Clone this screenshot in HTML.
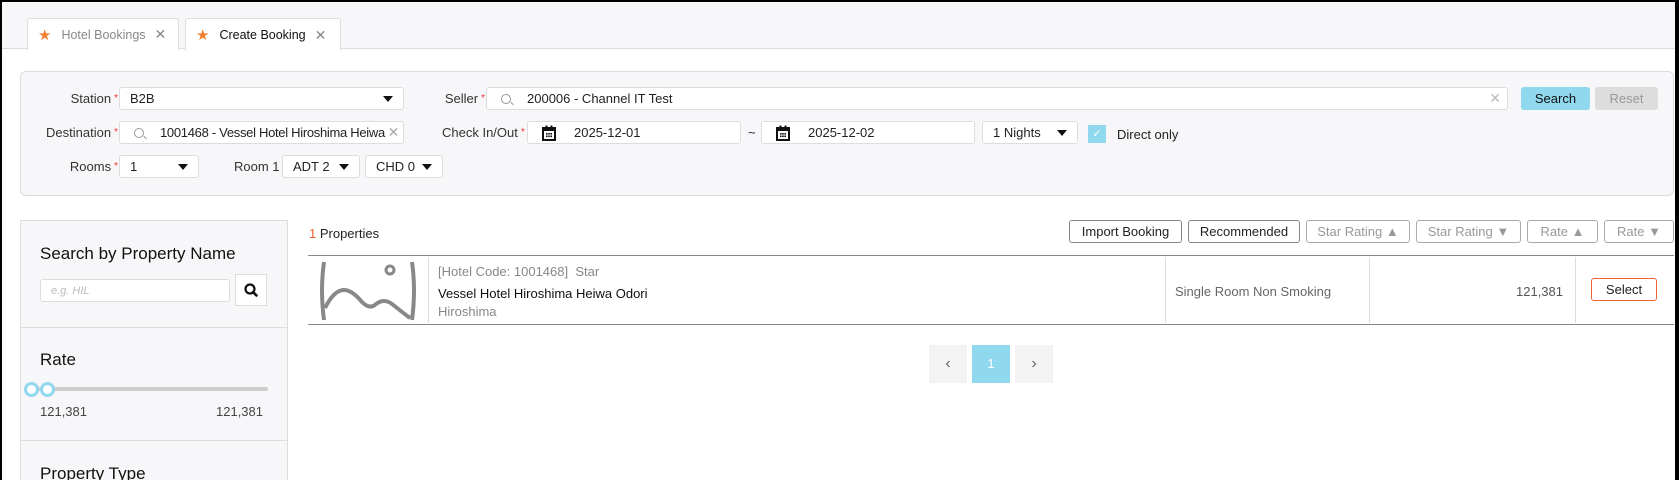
<!DOCTYPE html>
<html><head><meta charset="utf-8"><style>
*{box-sizing:border-box;margin:0;padding:0}
body{width:1679px;height:480px;overflow:hidden;background:#000;font-family:"Liberation Sans",sans-serif;font-size:13px;color:#222;position:relative}
#pg{position:absolute;left:2px;top:2px;width:1673px;height:478px;background:#fff;overflow:hidden}
.a{position:absolute;white-space:nowrap}
.top{left:0;top:0;width:1673px;height:47px;background:#f7f6f9;border-bottom:1px solid #ddd}
.tab{top:16px;height:32px;border:1px solid #ddd;border-bottom:none;background:#fff;border-radius:3px 3px 0 0;display:flex;align-items:center;padding-left:10px;font-size:12.5px}
.star{color:#f08030;font-size:15px;margin-right:10px}
.x{color:#888;font-size:14px;margin-left:9px}
.panel{left:18px;top:69px;width:1654px;height:125px;background:#f7f6f9;border:1px solid #ddd;border-radius:6px}
.lbl{text-align:right;color:#333;font-size:13px;line-height:24px}
.lbl i{color:#e33;font-style:normal;font-size:10px;margin-left:3px;vertical-align:top}
.inp{background:#fff;border:1px solid #ddd;border-radius:3px;height:23px;display:flex;align-items:center;padding-left:10px;font-size:13px;overflow:hidden;white-space:nowrap}
.tri{position:absolute;right:10px;top:8px;width:0;height:0;border-left:5px solid transparent;border-right:5px solid transparent;border-top:6px solid #111}
.mag{flex:none;width:10px;height:10px;border:1.3px solid #999;border-radius:50%;margin-right:16px;position:relative;margin-left:4px}
.mag:after{content:"";position:absolute;width:4px;height:1.3px;background:#999;right:-4px;bottom:-2px;transform:rotate(45deg)}
.btn{border:1px solid #888;border-radius:3px;background:#fff;height:23px;display:flex;align-items:center;justify-content:center;font-size:13px}
.gray{color:#999;border-color:#aaa}
.side{left:18px;top:218px;width:268px;height:270px;background:#f7f6f9;border:1px solid #ddd}
.h{font-size:17px;color:#111}
</style></head><body><div id="pg">
<div class="a top"></div>
<div class="a tab" style="left:25px;width:152px;color:#888"><span class="star">★</span>Hotel Bookings<span class="x">✕</span></div>
<div class="a tab" style="left:183px;width:156px;height:33px;color:#111"><span class="star">★</span>Create Booking<span class="x">✕</span></div>

<div class="a panel"></div>
<div class="a lbl" style="left:30px;top:85px;width:86px">Station<i>*</i></div>
<div class="a inp" style="left:117px;top:85px;width:285px">B2B<span class="tri"></span></div>
<div class="a lbl" style="left:30px;top:119px;width:86px">Destination<i>*</i></div>
<div class="a inp" style="left:117px;top:119px;width:285px;letter-spacing:-0.3px"><span class="mag"></span>1001468 - Vessel Hotel Hiroshima Heiwa<span style="color:#aaa;position:absolute;right:4px;font-size:14px;background:#fff">✕</span></div>
<div class="a lbl" style="left:30px;top:153px;width:86px">Rooms<i>*</i></div>
<div class="a inp" style="left:117px;top:153px;width:80px">1<span class="tri"></span></div>
<div class="a lbl" style="left:232px;top:153px">Room 1</div>
<div class="a inp" style="left:280px;top:153px;width:78px">ADT 2<span class="tri"></span></div>
<div class="a inp" style="left:363px;top:153px;width:78px">CHD 0<span class="tri"></span></div>

<div class="a lbl" style="left:420px;top:85px;width:63px">Seller<i>*</i></div>
<div class="a inp" style="left:484px;top:85px;width:1022px"><span class="mag"></span>200006 - Channel IT Test<span style="color:#bbb;position:absolute;right:6px;font-size:14px">✕</span></div>
<div class="a btn" style="left:1519px;top:85px;width:69px;background:#90d8ee;border-color:#90d8ee;color:#111">Search</div>
<div class="a btn" style="left:1593px;top:85px;width:63px;background:#ddd;border-color:#ddd;color:#999">Reset</div>
<div class="a lbl" style="left:440px;top:119px;width:103px;text-align:left">Check In/Out<i>*</i></div>
<div class="a inp" style="left:525px;top:119px;width:214px;padding-left:14px"><svg width="14" height="16" viewBox="0 0 14 16" style="margin-right:18px"><rect x="1" y="3" width="12" height="12" fill="none" stroke="#111" stroke-width="2"/><rect x="1" y="3" width="12" height="3" fill="#111"/><rect x="3.5" y="0.5" width="2" height="3" fill="#111"/><rect x="8.5" y="0.5" width="2" height="3" fill="#111"/><g fill="#111"><rect x="4" y="8" width="1.6" height="1.6"/><rect x="6.2" y="8" width="1.6" height="1.6"/><rect x="8.4" y="8" width="1.6" height="1.6"/><rect x="4" y="10.5" width="1.6" height="1.6"/><rect x="6.2" y="10.5" width="1.6" height="1.6"/><rect x="8.4" y="10.5" width="1.6" height="1.6"/></g></svg>2025-12-01</div>
<div class="a" style="left:746px;top:123px">~</div>
<div class="a inp" style="left:759px;top:119px;width:214px;padding-left:14px"><svg width="14" height="16" viewBox="0 0 14 16" style="margin-right:18px"><rect x="1" y="3" width="12" height="12" fill="none" stroke="#111" stroke-width="2"/><rect x="1" y="3" width="12" height="3" fill="#111"/><rect x="3.5" y="0.5" width="2" height="3" fill="#111"/><rect x="8.5" y="0.5" width="2" height="3" fill="#111"/><g fill="#111"><rect x="4" y="8" width="1.6" height="1.6"/><rect x="6.2" y="8" width="1.6" height="1.6"/><rect x="8.4" y="8" width="1.6" height="1.6"/><rect x="4" y="10.5" width="1.6" height="1.6"/><rect x="6.2" y="10.5" width="1.6" height="1.6"/><rect x="8.4" y="10.5" width="1.6" height="1.6"/></g></svg>2025-12-02</div>
<div class="a inp" style="left:980px;top:119px;width:96px">1 Nights<span class="tri"></span></div>
<div class="a" style="left:1086px;top:123px;width:18px;height:18px;background:#90d8ee;color:#fff;font-size:11px;text-align:center;line-height:18px">✓</div>
<div class="a" style="left:1115px;top:125px">Direct only</div>

<div class="a side"></div>
<div class="a h" style="left:38px;top:242px">Search by Property Name</div>
<div class="a inp" style="left:38px;top:277px;width:190px;color:#bbb;font-style:italic;font-size:11px">e.g. HIL</div>
<div class="a" style="left:233px;top:272px;width:32px;height:32px;background:#fff;border:1px solid #ddd"><svg width="30" height="30" viewBox="0 0 30 30"><circle cx="14" cy="14" r="4.5" fill="none" stroke="#111" stroke-width="2.2"/><path d="M17 17 L20.5 20.5" stroke="#111" stroke-width="2.6" stroke-linecap="round"/></svg></div>
<div class="a" style="left:18px;top:325px;width:268px;border-top:1px solid #ddd"></div>
<div class="a h" style="left:38px;top:348px">Rate</div>
<div class="a" style="left:32px;top:385px;width:234px;height:4px;background:#ccc;border-radius:2px"></div>
<div class="a" style="left:22px;top:380px;width:15px;height:15px;border:3px solid #90d8ee;border-radius:50%;background:#fff"></div>
<div class="a" style="left:38px;top:380px;width:15px;height:15px;border:3px solid #90d8ee;border-radius:50%;background:#fff"></div>
<div class="a" style="left:38px;top:402px;color:#444">121,381</div>
<div class="a" style="left:214px;top:402px;color:#444">121,381</div>
<div class="a" style="left:18px;top:438px;width:268px;border-top:1px solid #ddd"></div>
<div class="a h" style="left:38px;top:462px">Property Type</div>

<div class="a" style="left:307px;top:224px"><span style="color:#f06030">1</span> Properties</div>
<div class="a btn" style="left:1067px;top:218px;width:113px">Import Booking</div>
<div class="a btn" style="left:1186px;top:218px;width:112px">Recommended</div>
<div class="a btn gray" style="left:1304px;top:218px;width:104px">Star Rating ▲</div>
<div class="a btn gray" style="left:1414px;top:218px;width:105px">Star Rating ▼</div>
<div class="a btn gray" style="left:1525px;top:218px;width:71px">Rate ▲</div>
<div class="a btn gray" style="left:1602px;top:218px;width:70px">Rate ▼</div>
<div class="a" style="left:306px;top:253px;width:1366px;border-top:1.5px solid #888"></div>
<div class="a" style="left:306px;top:322px;width:1366px;border-top:1.5px solid #888"></div>
<svg class="a" style="left:316px;top:258px" width="100" height="62" viewBox="0 0 100 62"><path d="M6 2 Q2 30 6 60 M94 2 Q98 30 94 60" stroke="#888" stroke-width="4" fill="none"/><circle cx="72" cy="10" r="4" stroke="#888" stroke-width="3" fill="none"/><path d="M7 48 Q16 30 26 30 Q34 30 44 42 Q52 50 58 44 Q66 38 74 44 Q84 52 92 58" stroke="#888" stroke-width="4" fill="none"/></svg>
<div class="a" style="left:426px;top:255px;height:66px;border-left:1px solid #ddd"></div>
<div class="a" style="left:436px;top:262px;color:#888">[Hotel Code: 1001468]&nbsp; Star</div>
<div class="a" style="left:436px;top:284px;color:#111">Vessel Hotel Hiroshima Heiwa Odori</div>
<div class="a" style="left:436px;top:302px;color:#888">Hiroshima</div>
<div class="a" style="left:1163px;top:255px;height:66px;border-left:1px solid #ddd"></div>
<div class="a" style="left:1173px;top:282px;color:#666">Single Room Non Smoking</div>
<div class="a" style="left:1367px;top:255px;height:66px;border-left:1px solid #ddd"></div>
<div class="a" style="left:1480px;top:282px;width:81px;text-align:right;color:#555">121,381</div>
<div class="a" style="left:1573px;top:255px;height:66px;border-left:1px solid #ddd"></div>
<div class="a btn" style="left:1589px;top:276px;width:66px;border-color:#f06030">Select</div>

<div class="a" style="left:927px;top:343px;width:38px;height:38px;background:#f3f3f3;color:#666;text-align:center;line-height:38px;font-size:16px">‹</div>
<div class="a" style="left:970px;top:343px;width:38px;height:38px;background:#90d8ee;color:#fff;text-align:center;line-height:38px">1</div>
<div class="a" style="left:1013px;top:343px;width:38px;height:38px;background:#f3f3f3;color:#666;text-align:center;line-height:38px;font-size:16px">›</div>
</div></body></html>
